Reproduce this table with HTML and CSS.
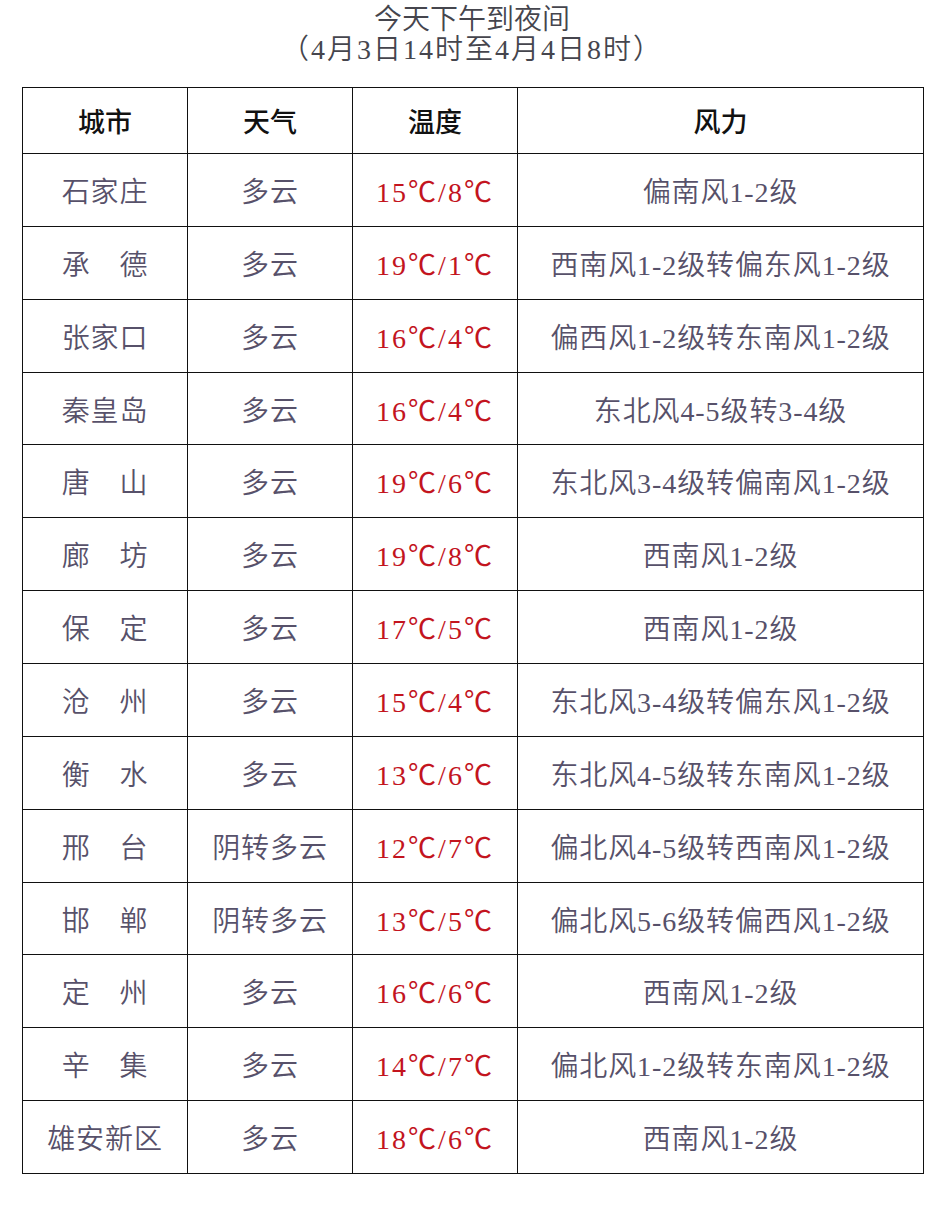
FILE: index.html
```html
<!DOCTYPE html>
<html lang="zh-CN">
<head>
<meta charset="utf-8">
<title>今天下午到夜间</title>
<link rel="stylesheet" href="styles.css">
</head>
<body>
<div class="page">
  <div class="title">
    <div>今天下午到夜间</div>
    <div class="sub">（4月3日14时至4月4日8时）</div>
  </div>
  <table class="forecast">
    <colgroup>
      <col class="c-city"><col class="c-wx"><col class="c-temp"><col class="c-wind">
    </colgroup>
    <thead>
      <tr><th>城市</th><th>天气</th><th>温度</th><th>风力</th></tr>
    </thead>
    <tbody>
      <tr><td>石家庄</td><td>多云</td><td class="temp">15℃/8℃</td><td>偏南风1-2级</td></tr>
      <tr><td>承　德</td><td>多云</td><td class="temp">19℃/1℃</td><td>西南风1-2级转偏东风1-2级</td></tr>
      <tr><td>张家口</td><td>多云</td><td class="temp">16℃/4℃</td><td>偏西风1-2级转东南风1-2级</td></tr>
      <tr><td>秦皇岛</td><td>多云</td><td class="temp">16℃/4℃</td><td>东北风4-5级转3-4级</td></tr>
      <tr><td>唐　山</td><td>多云</td><td class="temp">19℃/6℃</td><td>东北风3-4级转偏南风1-2级</td></tr>
      <tr><td>廊　坊</td><td>多云</td><td class="temp">19℃/8℃</td><td>西南风1-2级</td></tr>
      <tr><td>保　定</td><td>多云</td><td class="temp">17℃/5℃</td><td>西南风1-2级</td></tr>
      <tr><td>沧　州</td><td>多云</td><td class="temp">15℃/4℃</td><td>东北风3-4级转偏东风1-2级</td></tr>
      <tr><td>衡　水</td><td>多云</td><td class="temp">13℃/6℃</td><td>东北风4-5级转东南风1-2级</td></tr>
      <tr><td>邢　台</td><td>阴转多云</td><td class="temp">12℃/7℃</td><td>偏北风4-5级转西南风1-2级</td></tr>
      <tr><td>邯　郸</td><td>阴转多云</td><td class="temp">13℃/5℃</td><td>偏北风5-6级转偏西风1-2级</td></tr>
      <tr><td>定　州</td><td>多云</td><td class="temp">16℃/6℃</td><td>西南风1-2级</td></tr>
      <tr><td>辛　集</td><td>多云</td><td class="temp">14℃/7℃</td><td>偏北风1-2级转东南风1-2级</td></tr>
      <tr><td>雄安新区</td><td>多云</td><td class="temp">18℃/6℃</td><td>西南风1-2级</td></tr>
    </tbody>
  </table>
</div>
</body>
</html>
```

FILE: styles.css
```css
html, body {
  margin: 0;
  padding: 0;
  background: #ffffff;
}

body {
  font-family: "Liberation Serif", "Noto Sans CJK SC", serif;
}

.page {
  width: 942px;
  padding: 5px 0 0 22px;
  box-sizing: border-box;
}

.title {
  width: 900px;
  text-align: center;
  font-size: 28px;
  line-height: 30px;
  color: #45454d;
  font-weight: 350;
  margin-bottom: 22px;
}

.title .sub {
  letter-spacing: 2px;
}

.forecast {
  width: 901px;
  border-collapse: collapse;
  table-layout: fixed;
}

.c-city, .c-wx, .c-temp { width: 165px; }
.c-wind { width: 406px; }

.forecast th,
.forecast td {
  border: 1.5px solid #111;
  text-align: center;
  vertical-align: middle;
  padding: 0;
  white-space: nowrap;
}

.forecast th {
  height: 65px;
  font-size: 27px;
  font-weight: 500;
  color: #111;
}

.forecast td {
  height: 71.86px;
  font-size: 28px;
  font-weight: 350;
  color: #57516a;
  letter-spacing: 0.9px;
}

.forecast td.temp {
  color: #c3141e;
  font-weight: 400;
  letter-spacing: 2px;
}
```
